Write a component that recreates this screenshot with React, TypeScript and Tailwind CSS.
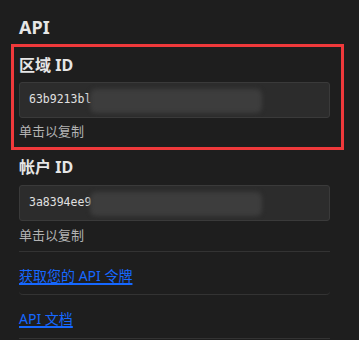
const font = { fontFamily: '"Noto Sans", "Noto Sans CJK SC", sans-serif' };

function IdField({ value }: { value: string }) {
  return (
    <div className="relative h-[36px] w-[311px] rounded-[3px] border border-[#3a3a3a] bg-[#2c2c2c] flex items-center pl-[9px] overflow-hidden">
      <span className="text-[11.5px] text-[#e0e0e0]" style={{ fontFamily: '"DejaVu Sans Mono", monospace' }}>
        {value}
      </span>
      {/* blurred-out remainder of the id */}
      <div className="absolute left-[70px] top-[6px] h-[24px] w-[172px] rounded-[6px] bg-[#3d3d3d] blur-[2px]" />
    </div>
  );
}

export default function App() {
  return (
    <div className="w-[359px] h-[340px] bg-[#1e1e1e] text-[#e6e6e6] pl-[19px] pt-[13px] overflow-hidden" style={font}>
      <h2 className="text-[18px] leading-[28px] font-bold mb-[3px]">API</h2>

      <div className="-ml-[8px] w-[333px] border-[3px] border-[#f0393b] pl-[5px] pr-[11px] pt-[6px] pb-[6px]">
        <h3 className="text-[16px] leading-[24px] font-bold">区域 ID</h3>
        <div className="mt-[5px]">
          <IdField value="63b9213bl" />
        </div>
        <p className="mt-[3px] text-[13px] leading-[20px] text-[#b3b3b3]">单击以复制</p>
      </div>

      <div className="w-[311px]">
        <h3 className="mt-[5px] text-[16px] leading-[24px] font-bold">帐户 ID</h3>
        <div className="mt-[6px]">
          <IdField value="3a8394ee9" />
        </div>
        <p className="mt-[4px] text-[13px] leading-[20px] text-[#b3b3b3]">单击以复制</p>

        <div className="mt-[6px] border-t border-[#333333]" />
        <div className="pt-[11px] pb-[7px] border-b border-[#333333] rounded-b-[4px]">
          <a href="#" className="text-[14px] leading-[20px] text-[#1668ff] underline decoration-2 underline-offset-[2px]">
            获取您的 API 令牌
          </a>
        </div>
        <div className="pt-[11px] pb-[8px] border-b border-[#333333]">
          <a href="#" className="text-[14px] leading-[20px] text-[#1668ff] underline decoration-2 underline-offset-[2px]">
            API 文档
          </a>
        </div>
      </div>
    </div>
  );
}
